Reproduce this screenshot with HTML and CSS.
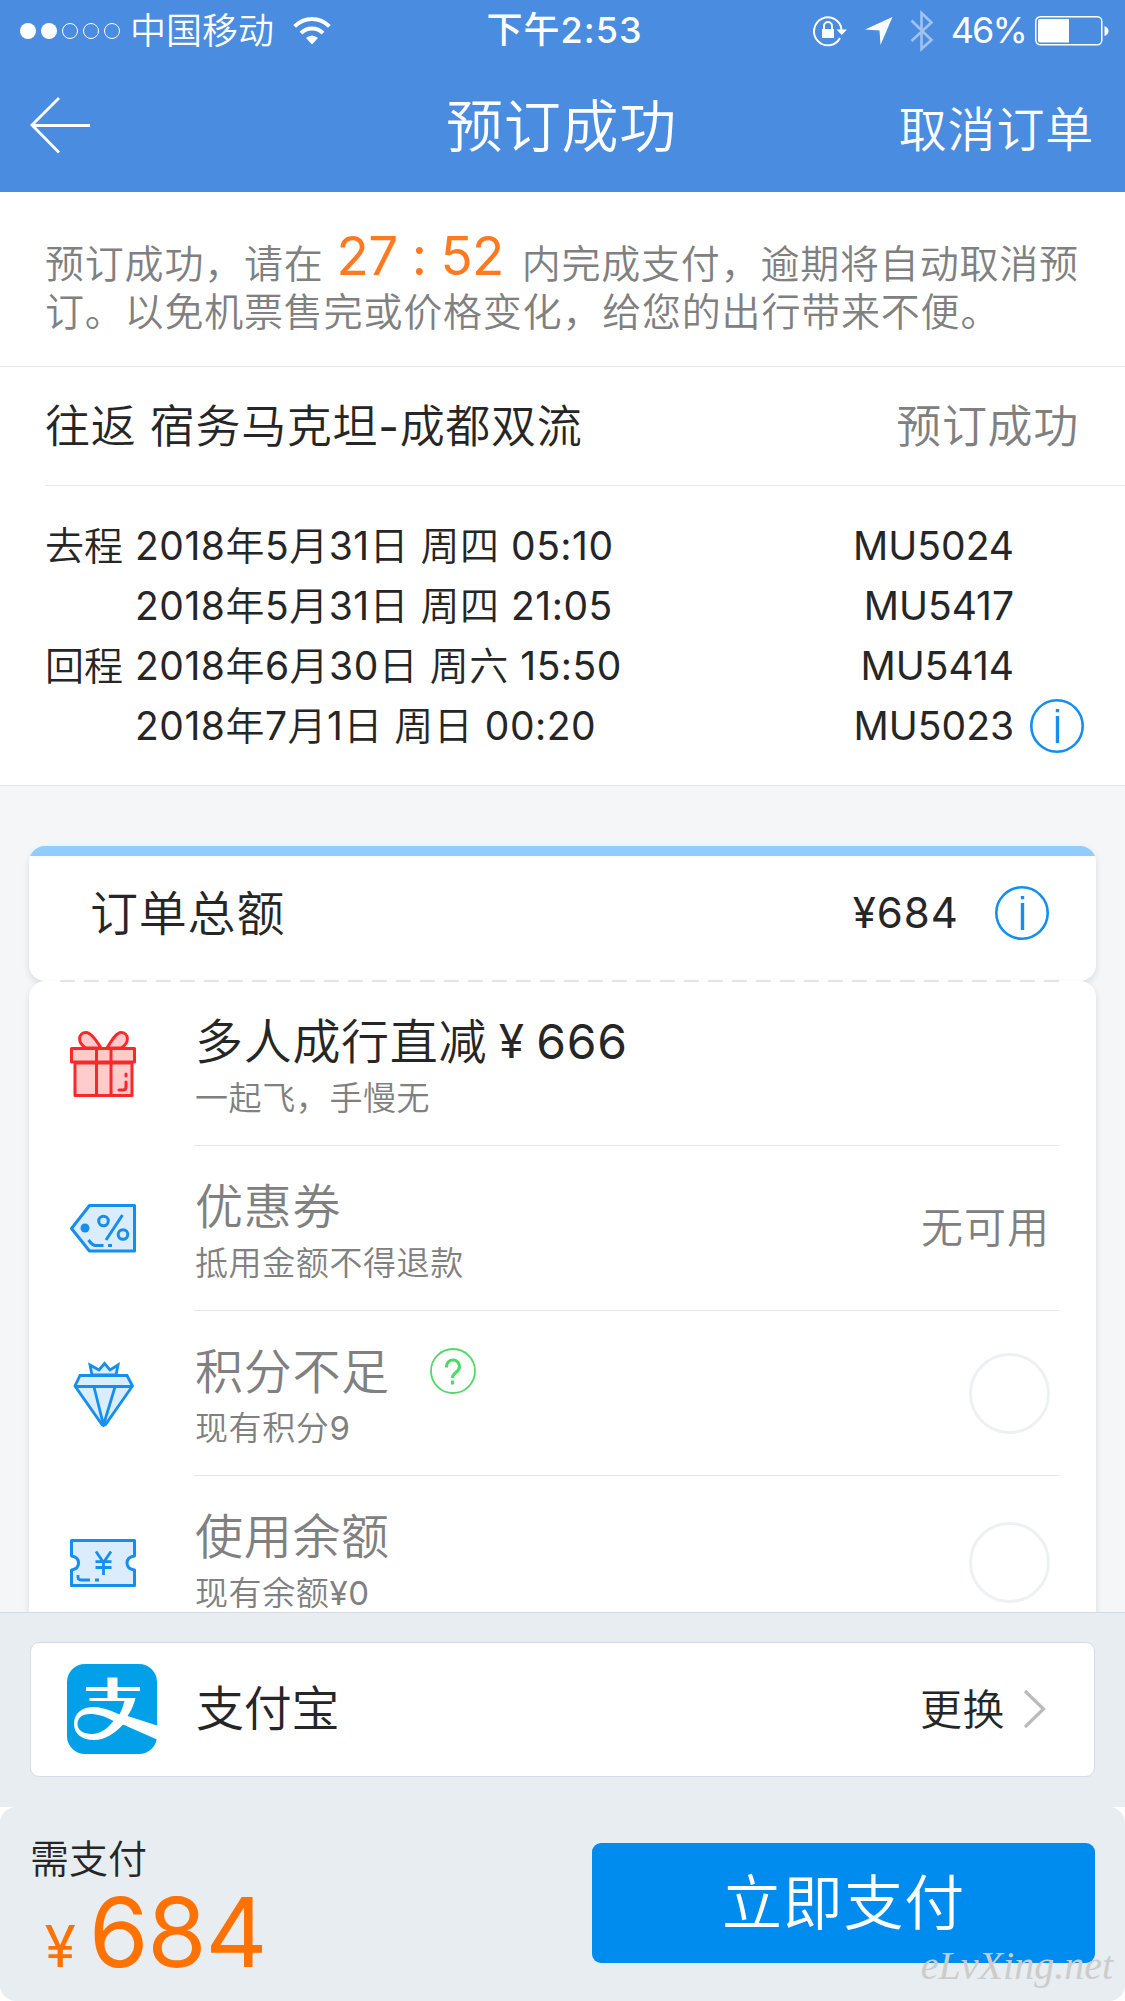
FILE: index.html
```html
<!DOCTYPE html>
<html lang="zh-CN">
<head>
<meta charset="utf-8">
<title>预订成功</title>
<link rel="stylesheet" href="styles.css">
</head>
<body>
<div class="screen">
  <header class="header">
    <div class="status">
      <div class="status-left">
        <svg class="signal" width="101" height="18" viewBox="0 0 101 18" fill="none" stroke="#fff">
          <circle cx="8" cy="9" r="8" fill="#fff" stroke="none"/><circle cx="29" cy="9" r="8" fill="#fff" stroke="none"/>
          <circle cx="50" cy="9" r="7.5"/><circle cx="71" cy="9" r="7.5"/><circle cx="92" cy="9" r="7.5"/>
        </svg>
        <span class="carrier">中国移动</span>
        <svg class="wifi" width="38" height="28" viewBox="0 0 38 28" fill="none" stroke="#fff" stroke-width="4">
          <path d="M1.6 9.4Q9 2 19 2T36.400 9.400M8 16.200Q12.500 11.500 19 11.500T30 16.200"/>
          <path d="M13 21Q19 16 25 21L19 27.500z" fill="#fff" stroke="none"/>
        </svg>
      </div>
      <span class="clock">下午2:53</span>
      <div class="status-right">
        <svg width="35" height="32" viewBox="0 0 35 32" fill="none" stroke="#fff" stroke-width="2">
          <path d="M28.600 15A13.800 14 0 1 0 27 23"/>
          <path d="M23.500 14.500H34L28.700 20z" fill="#fff" stroke="none"/>
          <rect x="9" y="14" width="12" height="9" fill="#fff" stroke="none"/>
          <path d="M11 15V11a4 4 0 0 1 8 0v4"/>
        </svg>
        <svg class="loc" width="28" height="28" viewBox="0 0 28 28"><path d="M27.500 0L15.500 28L14.500 13.500L0 12.500z" fill="#fff"/></svg>
        <svg class="bt" width="24" height="42" viewBox="0 0 24 42" fill="none" stroke="#9fc2f0" stroke-width="2.600"><path d="M1.500 10.500L21.500 30L11.500 39V3L21.500 12.500L1.500 31"/></svg>
        <span class="percent">46%</span>
        <svg class="battery" width="74" height="30" viewBox="0 0 74 30"><rect x=".8" y=".8" width="66" height="28" rx="4.500" fill="none" stroke="#fff" stroke-width="1.500"/><path d="M5 3H34V26.500H5Q3 26.500 3 24.500V5Q3 3 5 3z" fill="#fff"/><path d="M69.500 10q4 1.500 4 5t-4 5z" fill="#fff"/></svg>
      </div>
    </div>
    <div class="nav">
      <svg class="back" width="62" height="58" viewBox="0 0 62 58" fill="none" stroke="#fff" stroke-width="2.800"><path d="M30 1L3 28L30 55.500M3 28.500H61"/></svg>
      <h1 class="nav-title">预订成功</h1>
      <span class="nav-action">取消订单</span>
    </div>
  </header>

  <main class="content">
    <section class="notice">
      <div class="notice-line">预订成功，请在<span class="countdown">27 : 52</span>内完成支付，逾期将自动取消预</div>
      <div class="notice-line">订。以免机票售完或价格变化，给您的出行带来不便。</div>
    </section>
    <section class="route">
      <span class="route-name">往返 宿务马克坦<span class="num">-</span>成都双流</span>
      <span class="route-state">预订成功</span>
    </section>
    <section class="flights">
      <div class="flight"><span class="leg">去程</span><span class="date"><span class="num">2018</span>年<span class="num">5</span>月<span class="num">31</span>日 周四 <span class="num">05:10</span></span><span class="no num">MU5024</span></div>
      <div class="flight"><span class="leg"></span><span class="date"><span class="num">2018</span>年<span class="num">5</span>月<span class="num">31</span>日 周四 <span class="num">21:05</span></span><span class="no num">MU5417</span></div>
      <div class="flight"><span class="leg">回程</span><span class="date"><span class="num">2018</span>年<span class="num">6</span>月<span class="num">30</span>日 周六 <span class="num">15:50</span></span><span class="no num">MU5414</span></div>
      <div class="flight"><span class="leg"></span><span class="date"><span class="num">2018</span>年<span class="num">7</span>月<span class="num">1</span>日 周日 <span class="num">00:20</span></span><span class="no num">MU5023</span>
        <svg class="info" width="54" height="54" viewBox="0 0 54 54"><circle cx="27" cy="27" r="25.700" fill="none" stroke="#158eed" stroke-width="2.600"/><path d="M27.500 10v3.300M27.500 17v27" stroke="#158eed" stroke-width="3.400"/></svg>
      </div>
    </section>

    <section class="order">
      <div class="total">
        <span class="total-label">订单总额</span>
        <span class="total-price num">¥684</span>
        <svg class="info" width="54" height="54" viewBox="0 0 54 54"><circle cx="27" cy="27" r="25.700" fill="none" stroke="#158eed" stroke-width="2.600"/><path d="M27.500 10v3.300M27.500 17v27" stroke="#158eed" stroke-width="3.400"/></svg>
      </div>
      <div class="options">
        <div class="option active">
          <svg class="icon" width="66" height="66" viewBox="0 0 66 66" fill="#ffcccb" stroke="#fa2828" stroke-width="3" stroke-linejoin="round" stroke-linecap="round">
            <path d="M31 17C25 7 20 1.500 16 1.500C8 1.500 7 12 16 17zM37 17C43 7 47 1.500 51 1.500C59 1.500 60 12 51 17z"/>
            <path d="M5 32H62V64.500H5zM1.500 17.500H64.500V31H1.500zM26.500 17.500H41V64.500H26.500z"/>
            <path d="M56 43v2M56 51v5q0 3-3 3h-4" fill="none"/>
          </svg>
          <div class="option-body"><div class="option-title">多人成行直减<span class="yen-cell num">¥</span><span class="num">666</span></div><div class="option-sub">一起飞，手慢无</div></div>
        </div>
        <div class="option">
          <svg class="icon" width="66" height="49" viewBox="0 0 66 49" fill="#dbecfc" stroke="#158eed" stroke-width="3" stroke-linejoin="round">
            <path d="M19.500 1.500H64.500V47H19.500L1.500 24.500z"/>
            <circle cx="15" cy="24" r="4.500" fill="#158eed" stroke="none"/>
            <circle cx="33.500" cy="17" r="4.800"/><circle cx="53" cy="30.500" r="4.800"/>
            <path d="M52.500 11L36 36M18.500 36q4 5.500 7 5.500h8M38 41.500h4" fill="none"/>
          </svg>
          <div class="option-body"><div class="option-title">优惠券</div><div class="option-sub">抵用金额不得退款</div></div>
          <span class="option-value">无可用</span>
        </div>
        <div class="option">
          <svg class="icon" width="66" height="66" viewBox="0 0 66 66" fill="#dbecfc" stroke="#158eed" stroke-width="2.800">
            <path d="M22 14L20 4L29 9L34.500 2.500L40 9L48 4L46 14z"/>
            <path d="M10 14.500H57L62.500 25L35.500 63.500H32L5 25z"/>
            <path d="M5 25.500H62M24 26L33.500 64L45 26" fill="none"/>
          </svg>
          <div class="option-body"><div class="option-title">积分不足<svg class="help" width="46" height="46" viewBox="0 0 46 46" fill="none" stroke="#52d869"><circle cx="23" cy="23" r="22" stroke-width="1.800"/><path d="M16.500 19.500v-1a6.500 6.500 0 0 1 13 0c0 6-7 6-7 11.500M22.500 32.500v4" stroke-width="3.200"/></svg></div><div class="option-sub">现有积分<span class="num">9</span></div></div>
          <span class="radio"></span>
        </div>
        <div class="option">
          <svg class="icon icon-low" width="66" height="48" viewBox="0 0 66 48" fill="#dbecfc" stroke="#158eed" stroke-width="3" stroke-linejoin="round">
            <path d="M1.500 1.500H64.500V17Q57 18 57 24T64.500 31V46.500H1.500V31Q8.500 30 8.500 24T1.500 17z"/>
            <path d="M26 12.500L33.500 23.500L41 12.500M33.500 23V36M25.500 22.700h16M25.500 28.500h16M8 36v2q0 3 3 3h9M25 41h4" fill="none" stroke-width="2.800"/>
          </svg>
          <div class="option-body"><div class="option-title">使用余额</div><div class="option-sub">现有余额<span class="num">¥0</span></div></div>
          <span class="radio radio-low"></span>
        </div>
      </div>
    </section>
  </main>

  <section class="method">
    <div class="method-card">
      <svg class="alipay" width="90" height="90" viewBox="0 0 90 90">
        <rect width="90" height="90" rx="18" fill="#02a0e9"/>
        <path d="M40.500 13.500H50.500V23H73V27H50.500V34H68.500Q66 44 60.500 52L90 61.500V75.500L56 60.500C47 70 38 76 27 76C15 76 7 70 7 60C7 49 15 43 27 43Q37 43 52.500 50.500Q55.500 45 57.500 37H22.500V34H40.500V27H19V23H40.500zM46.500 57C37 52 31 50 23 50C15 50 10.500 54 10.500 60C10.500 66 16 70 25 70C33 70 40 65 46.500 57z" fill="#fff" fill-rule="evenodd"/>
      </svg>
      <span class="method-name">支付宝</span>
      <span class="method-change">更换</span>
      <svg class="chevron" width="24" height="40" viewBox="0 0 24 40" fill="none" stroke="#bbb" stroke-width="3.200"><path d="M2 2L20.500 20L2 38"/></svg>
    </div>
  </section>

  <footer class="footer">
    <div class="bar">
      <div class="due">
        <div class="due-label">需支付</div>
        <div class="due-price"><span class="yen">¥</span>684</div>
      </div>
      <button class="pay">立即支付</button>
      <span class="watermark">eLvXing.net</span>
    </div>
  </footer>
</div>
</body>
</html>
```
FILE: styles.css
```css
* { box-sizing: border-box; }

body {
  margin: 0;
  color: #262626;
  background: #fff;
  font-family: Inter, "Noto Sans CJK SC", sans-serif;
  font-weight: 350;
  line-height: 1.2;
}

svg { display: block; flex: none; }
span, h1 { white-space: nowrap; }
.num { font-weight: 400; }

.screen { display: flex; flex-direction: column; width: 1125px; height: 2001px; overflow: hidden; }

.header { flex: none; height: 192px; background: #4a8ce0; color: #fff; }
.status { display: grid; grid-template-columns: 1fr auto 1fr; align-items: center; height: 60px; padding: 0 16px 0 20px; font-size: 36px; }
.status-left, .status-right { display: flex; align-items: center; }
.status-left { padding-top: 1px; }
.status-right { justify-content: flex-end; padding-top: 1px; }
.carrier { margin-left: 9px; padding-top: 2px; }
.wifi { margin-left: 19px; }
.clock { padding-top: 2px; font-weight: 500; letter-spacing: 1px; }
.loc { margin-left: 17px; }
.bt { margin-left: 17px; }
.percent { margin: 0 9px 0 17px; padding-top: 1px; font-size: 36px; font-weight: 400; letter-spacing: -1.9px; }

.nav { display: grid; grid-template-columns: 1fr auto 1fr; align-items: center; height: 132px; padding: 0 31px 0 29px; }
.nav-title { margin: 0; padding-top: 1px; font-size: 57px; font-weight: 350; line-height: 80px; letter-spacing: .7px; }
.nav-action { justify-self: end; font-size: 48px; line-height: 70px; letter-spacing: .8px; padding-top: 7px; }

.content { flex: 1; min-height: 0; overflow: hidden; background: #f4f6f8; }

.notice { height: 175px; padding: 48px 0 0 45px; background: #fff; border-bottom: 1px solid #e6e7e8; color: #808080; font-size: 39px; letter-spacing: .8px; }
.notice-line { height: 48px; line-height: 48px; white-space: nowrap; }
.countdown { display: inline-block; height: 48px; margin: 0 18px 0 13px; vertical-align: top; color: #ff7920; font-size: 53px; font-weight: 400; line-height: 48px; letter-spacing: -.7px; transform: translateY(-8px); }

.route { display: flex; justify-content: space-between; align-items: center; height: 119px; padding: 1px 46px 0 45px; background: #fff linear-gradient(#e6e7e8, #e6e7e8) 45px 100% / 100% 1px no-repeat; font-size: 45px; letter-spacing: .7px; }
.route-state { color: #808080; }

.flights { height: 300px; padding-top: 30px; background: #fff; border-bottom: 1px solid #e3e5e7; font-size: 39px; }
.flight { display: flex; align-items: center; height: 60px; padding-left: 45px; line-height: 60px; }
.leg { width: 90px; }
.date { width: 500px; letter-spacing: .5px; }
.no { width: 379px; text-align: right; }
.flight .info { margin-left: 16px; }

.order { margin: 60px 29px 0; }
.total { display: flex; align-items: center; height: 135px; padding: 0 47px 1px 61px; border-radius: 16px; background: #fff linear-gradient(#90ccfc, #90ccfc) 0 0 / 100% 10px no-repeat; box-shadow: 0 3px 6px rgba(40, 60, 80, .13); }
.total-label { flex: 1; padding-top: 2px; font-size: 48px; letter-spacing: .8px; }
.total-price { margin-right: 36px; font-size: 42px; letter-spacing: 1px; }
.options { position: relative; padding: 0 37px 0 41px; border-radius: 16px; background: #fff; box-shadow: 0 3px 6px rgba(40, 60, 80, .13); }
.options::before { content: ""; position: absolute; left: 31px; right: 37px; top: -1px; height: 2px; background: repeating-linear-gradient(90deg, #e1e5ea 0 15px, #fff 15px 24px); }
.option { position: relative; display: flex; align-items: center; height: 165px; color: #808080; }
.icon { margin-right: 58px; }
.icon-low { margin-top: 8px; }
.option-body { flex: 1; height: 165px; padding-top: 25px; border-bottom: 1px solid #e6e7e9; }
.option:last-child .option-body { border: 0; }
.option-title { display: flex; align-items: center; height: 71px; padding-left: 1px; font-size: 48px; line-height: 71px; letter-spacing: .7px; }
.active .option-title { color: #262626; }
.yen-cell { width: 49px; font-size: 46px; text-align: center; }
.option-sub { padding-left: 1px; font-size: 33px; line-height: 42px; letter-spacing: .6px; }
.help { margin: 0 0 2px 40px; }
.option-value { position: absolute; right: 9px; font-size: 42px; letter-spacing: 1px; }
.radio { position: absolute; right: 9px; width: 81px; height: 81px; border: 3px solid #eef1f2; border-radius: 50%; }
.radio-low { top: 46px; }

.method { flex: none; height: 195px; padding: 29px 30px 0; background: #e8edf1; border-top: 1px solid #d3dce4; }
.method-card { display: flex; align-items: center; height: 135px; padding: 0 47px 1px 36px; background: #fff; border: 1px solid #d3dce6; border-radius: 9px; }
.method-name { flex: 1; margin-left: 39px; font-size: 48px; letter-spacing: -.3px; }
.method-change { margin-right: 18px; padding-top: 2px; font-size: 42px; letter-spacing: .5px; }

.footer { flex: none; height: 194px; background: #fff; }
.bar { position: relative; display: flex; justify-content: space-between; height: 194px; padding: 36px 30px 0; background: #e8edf1; border-radius: 16px; }
.due-label { height: 32px; line-height: 32px; font-size: 39px; }
.due-price { display: flex; align-items: baseline; height: 100px; margin-top: 7px; color: #ff7200; font-size: 96px; line-height: 100px; font-weight: 400; letter-spacing: -1.2px; }
.yen { width: 59px; font-size: 57px; text-align: center; font-weight: 400; }
.pay { width: 503px; height: 120px; padding: 0; border: 0; border-radius: 9px; background: #008bee; color: #fff; font: 350 60px/120px Inter, "Noto Sans CJK SC", sans-serif; letter-spacing: .8px; }
.watermark { position: absolute; right: 12px; bottom: 11px; color: #ccc; font: italic 400 40px/48px "Liberation Serif", serif; }
```
